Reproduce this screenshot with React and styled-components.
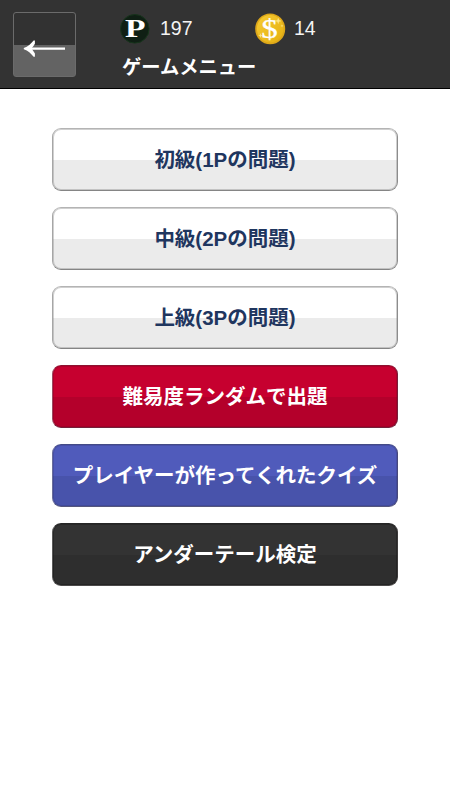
import styled, { createGlobalStyle } from "styled-components";

const MENU = [
  { label: "初級(1Pの問題)", tone: "light" },
  { label: "中級(2Pの問題)", tone: "light" },
  { label: "上級(3Pの問題)", tone: "light" },
  { label: "難易度ランダムで出題", tone: "red" },
  { label: "プレイヤーが作ってくれたクイズ", tone: "blue" },
  { label: "アンダーテール検定", tone: "dark" },
];

const TONES = {
  light: {
    top: "#ffffff",
    bottom: "#ebebeb",
    text: "#1f365f",
    edge: "#b4b4b4 #8c8c8c #858585 #a6a6a6",
    inner: "rgba(120, 120, 120, 0.35)",
  },
  red: {
    top: "#c6002f",
    bottom: "#b4002b",
    text: "#ffffff",
    edge: "#8e1230 #74203a #74203a #9a4a60",
    inner: "rgba(90, 0, 30, 0.2)",
  },
  blue: {
    top: "#505bbb",
    bottom: "#4853ab",
    text: "#ffffff",
    edge: "#444b86 #48497a #55567c #6a6d9a",
    inner: "rgba(40, 40, 90, 0.2)",
  },
  dark: {
    top: "#333333",
    bottom: "#2e2e2e",
    text: "#ffffff",
    edge: "#262626 #3c3a3a #4c4a4a #5a5a5a",
    inner: "rgba(0, 0, 0, 0.2)",
  },
};

export default function App() {
  return (
    <>
      <GlobalStyle />
      <HeaderStyle>
        <BackButton aria-label="戻る">
          <svg width="61" height="63" viewBox="0 0 61 63">
            <path
              d="M51 35.6H14"
              fill="none"
              stroke="#fff"
              strokeWidth="2.4"
            />
            <path
              d="M19.6 27.6H20.9V30.8C19.6 32.8 18.6 34.4 17.4 35.6C18.6 36.8 19.6 38.6 20.9 40.6V43.8H19.6C17 40.6 14 37.6 9.8 36.2V35C14 33.8 17 30.8 19.6 27.6Z"
              fill="#fff"
            />
          </svg>
        </BackButton>
        <InfoStyle>
          <ScoreRow>
            <ScoreItem $width={135} $gap={10}>
              <PointIcon />
              <span>197</span>
            </ScoreItem>
            <ScoreItem $gap={8}>
              <CoinIcon />
              <span>14</span>
            </ScoreItem>
          </ScoreRow>
          <TitleStyle>ゲームメニュー</TitleStyle>
        </InfoStyle>
      </HeaderStyle>
      <MenuStyle>
        {MENU.map((item) => (
          <MenuButton key={item.label} $tone={TONES[item.tone]}>
            {item.label}
          </MenuButton>
        ))}
      </MenuStyle>
    </>
  );
}

function PointIcon() {
  return (
    <svg width="30" height="30" viewBox="0 0 30 30">
      <circle cx="14.8" cy="14.8" r="14.3" fill="#0f1f14" stroke="#17351c" />
      <text
        x="15.3"
        y="23"
        textAnchor="middle"
        fontFamily="Liberation Serif, serif"
        fontWeight="bold"
        fontSize="25"
        textLength="20.5"
        lengthAdjust="spacingAndGlyphs"
        fill="#fff"
      >
        P
      </text>
    </svg>
  );
}

function CoinIcon() {
  return (
    <svg width="31" height="32" viewBox="0 0 31 32">
      <defs>
        <linearGradient id="coin" x1="0" y1="0" x2="1" y2="1">
          <stop offset="0" stopColor="#f6cb34" />
          <stop offset="1" stopColor="#e5b010" />
        </linearGradient>
      </defs>
      <ellipse cx="15.2" cy="15.9" rx="15" ry="15.4" fill="#dda719" />
      <ellipse cx="15.2" cy="15.7" rx="13.3" ry="13.7" fill="url(#coin)" />
      <path
        d="M23.2 4.5l.8 2.6 2.6.8-2.6.8-.8 2.6-.8-2.6-2.6-.8 2.6-.8zM5.5 20l.6 1.9 1.9.6-1.9.6-.6 1.9-.6-1.9-1.9-.6 1.9-.6zM27 11.2l.4 1.3 1.3.4-1.3.4-.4 1.3-.4-1.3-1.3-.4 1.3-.4z"
        fill="#fbe486"
      />
      <text
        x="14.6"
        y="24.6"
        textAnchor="middle"
        fontFamily="Liberation Serif, serif"
        fontSize="27"
        textLength="16.5"
        lengthAdjust="spacingAndGlyphs"
        fill="#fff"
        stroke="#fff"
        strokeWidth="0.25"
      >
        $
      </text>
    </svg>
  );
}

const GlobalStyle = createGlobalStyle`
  body {
    margin: 0;
    background-color: #ffffff;
    font-family: "Liberation Sans", "Noto Sans CJK JP", sans-serif;
  }
`;

const HeaderStyle = styled.header`
  display: flex;
  align-items: flex-start;
  box-sizing: border-box;
  height: 89px;
  padding: 12px 13px 0;
  background-color: #333333;
  border-bottom: 1px solid #000000;
`;

const BackButton = styled.button`
  flex: none;
  box-sizing: border-box;
  width: 63px;
  height: 65px;
  padding: 0;
  border: 1px solid #6b6b6b;
  border-radius: 3px;
  background: linear-gradient(#323232 32px, #636363 32px);
  svg {
    display: block;
  }
`;

const InfoStyle = styled.div`
  margin-left: 44px;
`;

const ScoreRow = styled.div`
  display: flex;
  height: 32px;
`;

const ScoreItem = styled.div`
  display: flex;
  align-items: center;
  gap: ${({ $gap }) => $gap}px;
  width: ${({ $width }) => ($width ? `${$width}px` : "auto")};
  height: 33px;
  font-size: 19.5px;
  line-height: 32px;
  color: #f4f4f4;
  span {
    padding-bottom: 2px;
  }
`;

const TitleStyle = styled.h1`
  margin: 10px 0 0 2px;
  font-size: 19.3px;
  font-weight: 700;
  line-height: 28px;
  color: #ffffff;
`;

const MenuStyle = styled.main`
  display: flex;
  flex-direction: column;
  align-items: center;
  gap: 16px;
  padding-top: 39px;
`;

const MenuButton = styled.button`
  box-sizing: border-box;
  width: 346px;
  height: 63px;
  padding: 0 0 3px;
  border: 1px solid;
  border-color: ${({ $tone }) => $tone.edge};
  border-radius: 9px;
  background: linear-gradient(
    ${({ $tone }) => $tone.top} 31px,
    ${({ $tone }) => $tone.bottom} 31px
  );
  box-shadow: inset 0 0 0 1px ${({ $tone }) => $tone.inner};
  font-family: inherit;
  font-size: 20.5px;
  font-weight: 700;
  white-space: nowrap;
  color: ${({ $tone }) => $tone.text};
`;
